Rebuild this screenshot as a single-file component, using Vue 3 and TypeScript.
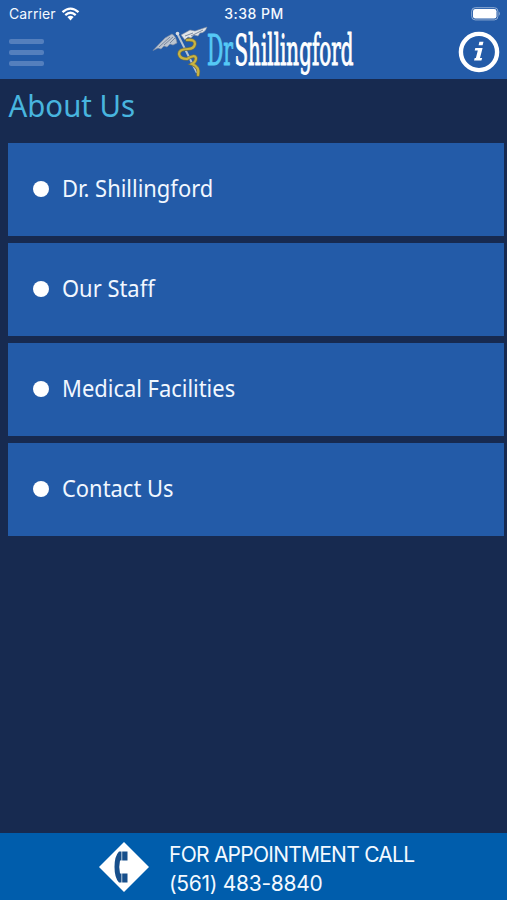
<script setup lang="ts">
interface MenuItem { label: string; target: string }

const items: MenuItem[] = [
  { label: 'Dr. Shillingford', target: '#doctor' },
  { label: 'Our Staff', target: '#staff' },
  { label: 'Medical Facilities', target: '#facilities' },
  { label: 'Contact Us', target: '#contact' },
]
</script>

<template>
  <div class="screen">
    <header class="header">
      <div class="status">
        <div class="carrier">
          <span>Carrier</span>
          <svg class="wifi" width="19" height="14" viewBox="0 0 18 14">
            <path d="M1 5.2Q9-2 17 5.2" />
            <path d="M3.8 8.1Q9 3.5 14.2 8.1" />
            <path class="solid" d="M5.9 10.1Q9 7.5 12.1 10.1L9 13.5Z" />
          </svg>
        </div>
        <span class="time">3:38 PM</span>
        <svg class="battery" width="30" height="14" viewBox="0 0 30 14">
          <rect class="shell" x=".7" y=".7" width="26.2" height="12.2" rx="3.5" />
          <rect class="charge" x="2" y="2" width="23.5" height="9.6" rx="2.3" />
          <path class="tip" d="M27.8 4.6Q30 6.8 27.8 9Z" />
        </svg>
      </div>
      <div class="bar">
        <button class="menu" aria-label="Menu"><i /><i /><i /></button>
        <svg class="logo" width="206" height="54" viewBox="0 0 206 54">
          <g>
            <path class="feather" d="M0 25.5Q7 18 12 13L19 9Q23 11 24 18L20 20L17 19L14 22L11 21L8 24L5 23Z" />
            <path class="feather light" d="M28 10L37 5L42 6L54 2Q52 8 47 8L45 11L41 10L38 13L35 12L32 15Z" />
            <path class="vein" d="M6 22L17 12M11 20L20 12M17 18L22 13M32 11L40 8M38 11L50 5" />
            <path class="staff" d="M24 8L44 48" />
            <path class="snake-shade" d="M34 15Q42 14 42 19Q41 24 35 24Q26 24 26 29Q27 34 34 34Q42 29 43 33Q43 37 39 39Q47 42 45 50" />
            <path class="snake" d="M34 15Q42 14 42 19Q41 24 35 24Q26 24 26 29Q27 34 34 34Q42 29 43 33Q43 37 39 39Q47 42 45 50" />
            <circle class="knob" cx="24.5" cy="8.5" r="1.8" />
          </g>
          <text class="dr" x="54" y="39.5" textLength="26" lengthAdjust="spacingAndGlyphs">Dr</text>
          <text class="name" x="81.5" y="39.5" textLength="119" lengthAdjust="spacingAndGlyphs">Shillingford</text>
        </svg>
        <svg class="info" width="42" height="42" viewBox="0 0 42 42">
          <circle cx="21" cy="21" r="18.1" />
          <path d="M21.4 10.8H25.5L24.6 14.3H20.6ZM17.3 17H24.6L22 27H24.2L23.4 29.5H16L16.7 27H17.9L19.8 19.5H16.7Z" />
        </svg>
      </div>
    </header>
    <main>
      <h1>About Us</h1>
      <nav>
        <a v-for="item in items" :key="item.target" :href="item.target">
          <span class="dot" /><span class="label">{{ item.label }}</span>
        </a>
      </nav>
    </main>
    <footer>
      <svg class="phone" width="50" height="50" viewBox="0 0 50 50">
        <path class="diamond" d="M25 0L50 25L25 50L0 25Z" />
        <path class="handset" d="M20 9.5H22.5V18.5H21Q19.5 25 21 31.5H22.5V40.5H20Q15.5 36 15.5 25Q15.5 14 20 9.5ZM23.2 9.5H28.5V18.5H23.2ZM23.2 31.5H28.5V40.5H23.2Z" />
      </svg>
      <div class="call"><span class="prompt">FOR APPOINTMENT CALL</span><span class="number">(561) 483-8840</span></div>
    </footer>
  </div>
</template>

<style>
body { background: #172a50; }
</style>

<style scoped>
.screen { box-sizing: border-box; height: 900px; display: flex; flex-direction: column; background: #172a50; color: #f4f9ff; }
.header { height: 79px; background: #235ba8; }
.status { height: 25px; display: grid; grid-template-columns: 1fr auto 1fr; padding: 1px 6px 0 9px; box-sizing: border-box; align-items: center; font: 14px/25px Inter, sans-serif; }
.carrier { display: flex; align-items: center; gap: 5px; letter-spacing: .1px; }
.wifi { fill: none; stroke: #fff; stroke-width: 2.3; }
.wifi .solid { fill: #fff; stroke: none; }
.time { font-weight: 500; font-size: 14px; letter-spacing: .5px; margin-right: 2px; }
.battery { justify-self: end; }
.shell { fill: none; stroke: #91add3; stroke-width: 1; }
.charge { fill: #fff; }
.tip { fill: #91add3; }
.bar { height: 54px; display: flex; align-items: center; padding: 0 7px 0 9px; }
.menu { border: 0; padding: 0; background: none; width: 35px; display: flex; flex-direction: column; gap: 6px; margin-left: -.5px; }
.menu i { height: 5px; border-radius: 2px; background: #547fbd; }
.logo { margin-left: 109.5px; overflow: visible; }
.logo text { font-family: "DejaVu Serif Condensed", "DejaVu Serif", serif; font-stretch: condensed; font-size: 43.5px; stroke-linejoin: round; stroke-width: 1; }
.dr { fill: #55c9f6; stroke: #55c9f6; }
.name { fill: #fff; stroke: #fff; }
.feather { fill: #bbc4d0; stroke: #7f8ca0; stroke-width: .6; }
.light { fill: #e1e5e9; }
.vein { fill: none; stroke: #6f7f99; stroke-width: .9; }
.staff { stroke: #b8c4d2; stroke-width: 2; }
.snake, .snake-shade { fill: none; stroke-linecap: round; }
.snake-shade { stroke: #757247; stroke-width: 3.6; }
.snake { stroke: #c9b441; stroke-width: 2.2; }
.knob { fill: #d8dce2; }
.info { margin-left: auto; }
.info circle { fill: none; stroke: #fff; stroke-width: 4.4; }
.info path { fill: #fff; }
main { flex: 1; padding: 0 3px 0 8px; }
h1 { margin: 0; height: 64px; box-sizing: border-box; padding-top: 5px; font: 400 31px/42px "Noto Sans", sans-serif; color: #48b5df; transform: translateX(.5px) scaleX(.948); transform-origin: left; }
nav { display: grid; gap: 7px; }
nav a { height: 93px; display: flex; align-items: center; padding-left: 25px; gap: 13px; background: #235ba8; color: #f1f7ff; text-decoration: none; font: 23px/32px "Noto Sans", sans-serif; }
.label { transform: translateY(-2px) scaleX(.953); transform-origin: left; }
.dot { width: 16px; height: 16px; border-radius: 50%; background: #fff; transform: translateY(-1px); }
footer { height: 67px; display: flex; background: #005dac; padding: 9px 0 0 99px; box-sizing: border-box; }
.call { display: flex; flex-direction: column; margin-left: 20px; margin-top: -2px; font: 21px/29px Inter, sans-serif; }
.prompt { letter-spacing: -.75px; }
.number { letter-spacing: -.3px; }
.diamond { fill: #fff; }
.handset { fill: #174f8b; }
</style>
